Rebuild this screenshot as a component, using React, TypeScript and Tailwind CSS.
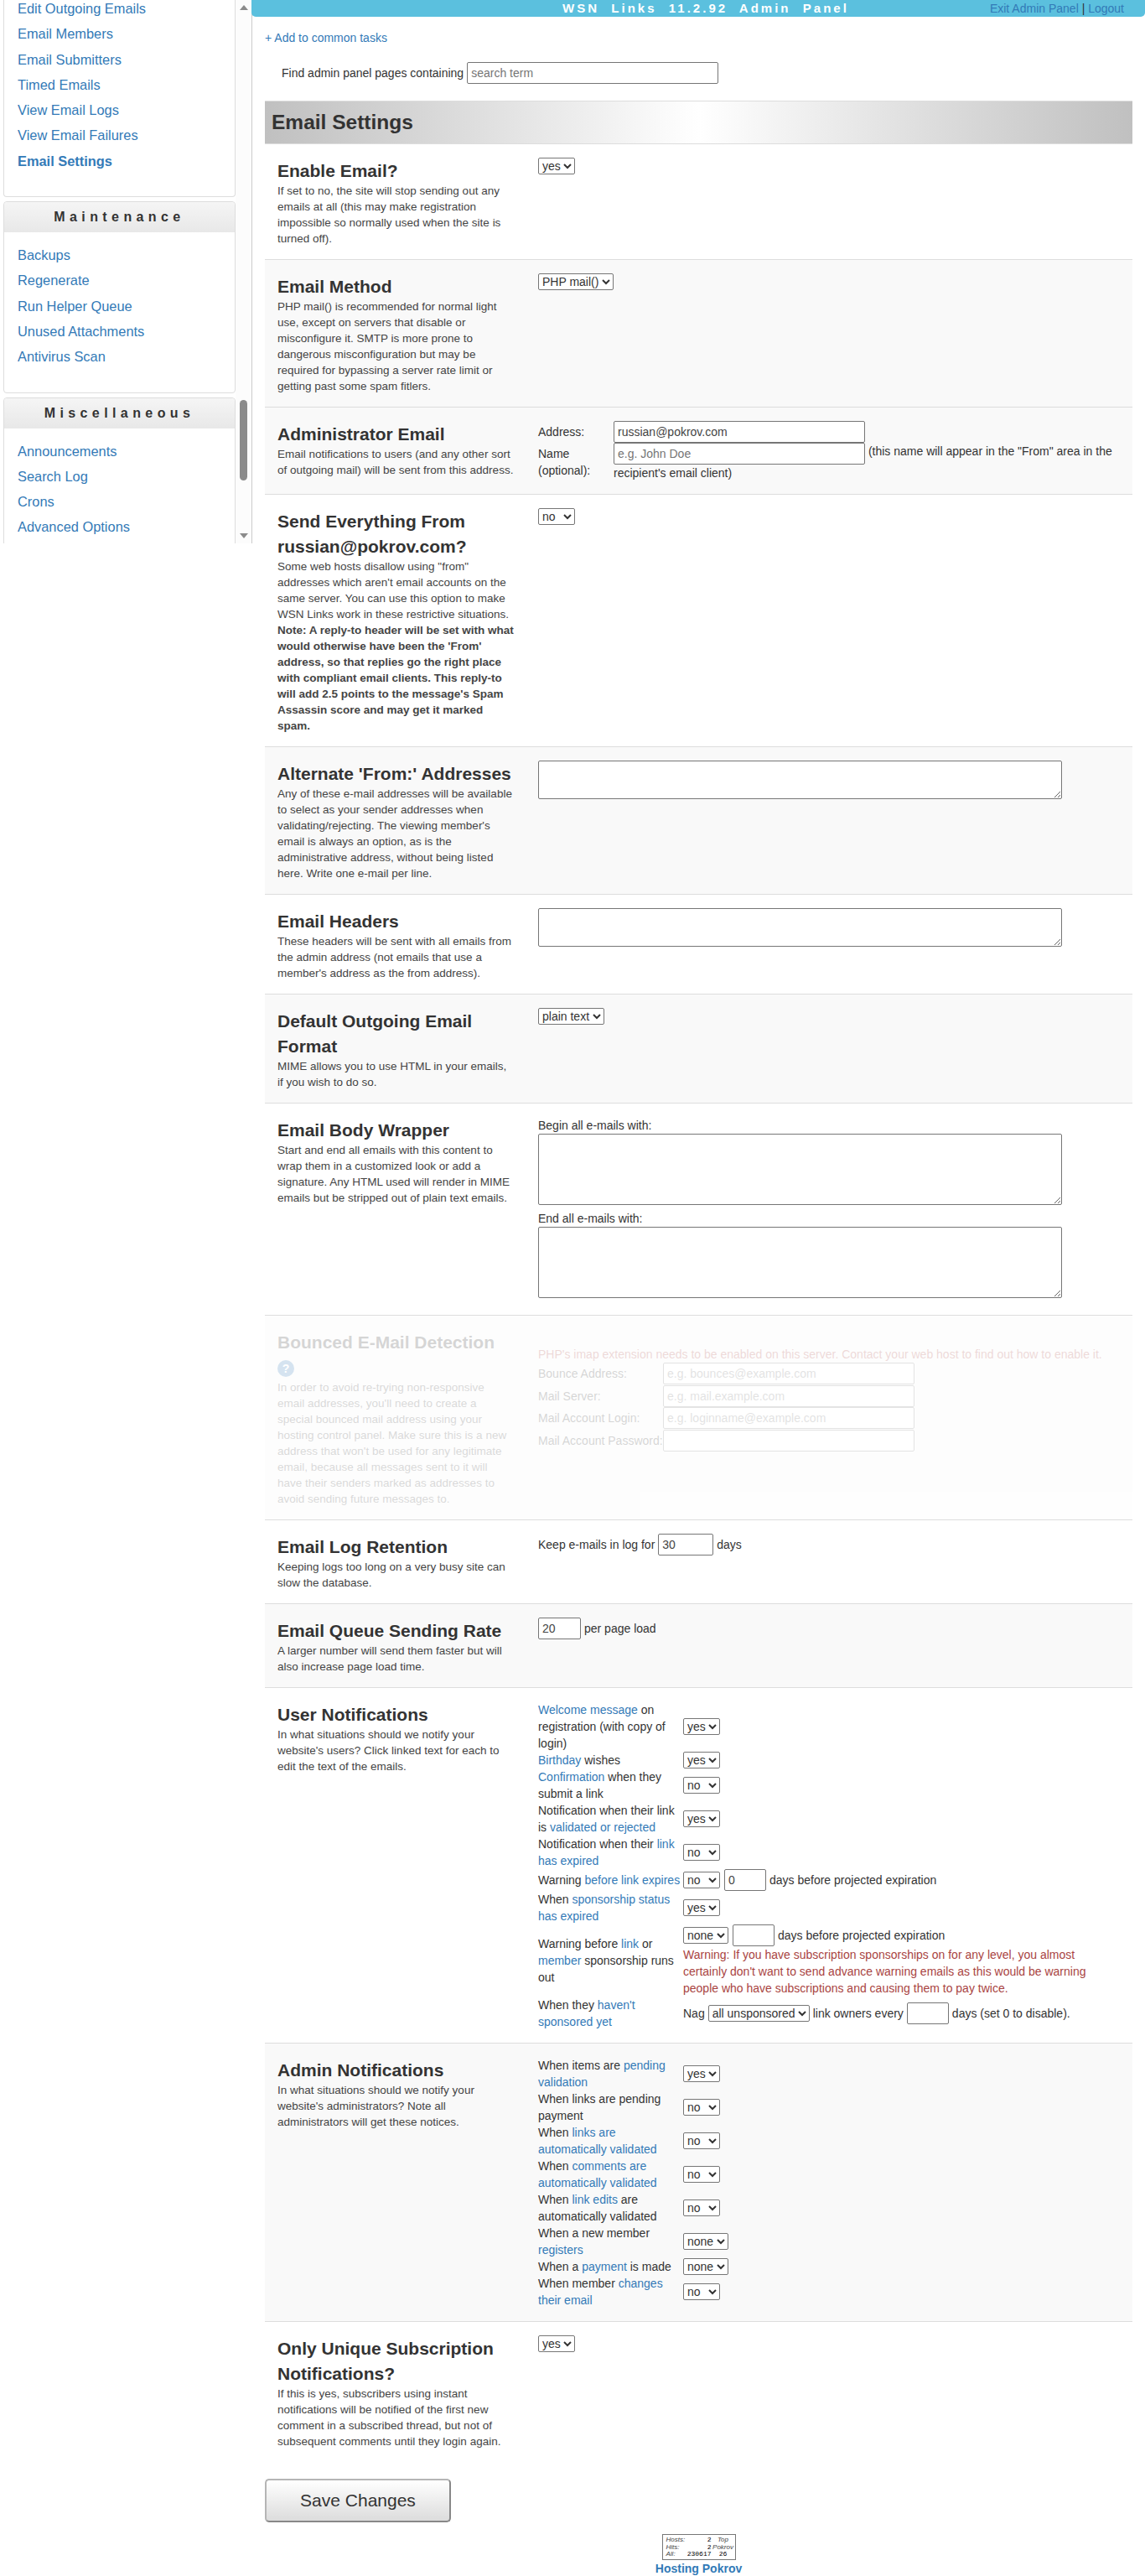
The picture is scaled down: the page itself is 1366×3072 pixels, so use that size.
import type { ReactNode } from "react";

const A = ({ children }: { children: ReactNode }) => (
  <a href="#" className="text-[#337ab7]">
    {children}
  </a>
);

const INPUT = "h-[26px] rounded-[2px] border border-[#767676] bg-white px-[4px] text-[#444] placeholder:text-[#757575]";
const TEXTAREA = "block w-[625px] resize rounded-[2px] border border-[#767676] bg-white";

function Select({ options, className = "" }: { options: string[]; className?: string }) {
  return (
    <select className={`h-[20px] rounded-[2px] border border-[#767676] bg-white text-[14px] text-[#333] ${className}`}>
      {options.map((o) => (
        <option key={o}>{o}</option>
      ))}
    </select>
  );
}

const yes = ["yes", "no"];
const no = ["no", "yes"];
const none = ["none", "no", "yes"];

function SideCard({ title, items, active }: { title?: string; items: string[]; active?: string }) {
  return (
    <div className={`mb-[5px] rounded-b-[4px] border border-[#ddd] pb-[27px] ${title ? "rounded-t-[4px]" : "border-t-0"}`}>
      {title ? (
        <div className="mb-[12px] h-[36px] rounded-t-[4px] bg-gradient-to-b from-[#f5f5f5] to-[#e8e8e8] text-center text-[16px] leading-[36px] font-bold tracking-[5.4px] text-[#333]">
          {title}
        </div>
      ) : (
        <div className="-mt-[5px]" />
      )}
      {items.map((item) => (
        <div key={item} className={`pl-[16px] text-[16.4px] leading-[30.3px] text-[#337ab7] ${item === active ? "font-bold" : ""}`}>
          {item}
        </div>
      ))}
    </div>
  );
}

function Sidebar() {
  return (
    <aside className="flex h-[648px] w-[301px] shrink-0 overflow-hidden">
      <div className="w-[281px] shrink-0 pl-[4px]">
        <SideCard
          items={["Edit Outgoing Emails", "Email Members", "Email Submitters", "Timed Emails", "View Email Logs", "View Email Failures", "Email Settings"]}
          active="Email Settings"
        />
        <SideCard title="Maintenance" items={["Backups", "Regenerate", "Run Helper Queue", "Unused Attachments", "Antivirus Scan"]} />
        <SideCard title="Miscellaneous" items={["Announcements", "Search Log", "Crons", "Advanced Options"]} />
      </div>
      {/* scrollbar */}
      <div className="flex w-[20px] flex-col items-center border-r border-[#ccc] bg-[#fcfcfc]">
        <svg width="10" height="6" viewBox="0 0 10 6" className="mt-[6px] fill-[#8b8b8b]">
          <path d="M5 0l5 6H0z" />
        </svg>
        <div className="mt-[465px] h-[96px] w-[9px] rounded-full bg-[#8b8b8b]" />
        <svg width="10" height="6" viewBox="0 0 10 6" className="mt-[63px] fill-[#8b8b8b]">
          <path d="M0 0h10L5 6z" />
        </svg>
      </div>
    </aside>
  );
}

function Section({
  title,
  desc,
  shaded,
  children,
  last,
}: {
  title: ReactNode;
  desc: ReactNode;
  shaded?: boolean;
  children: ReactNode;
  last?: boolean;
}) {
  return (
    <div className={`grid grid-cols-[326px_1fr] pt-[16px] pb-[15px] ${shaded ? "bg-[#f9f9f9]" : ""} ${last ? "" : "border-b border-[#ddd]"}`}>
      <div className="pr-[29px] pl-[15px]">
        <h3 className="mt-[1px] -mb-[1px] text-[21px] leading-[30px] font-bold text-[#333]">{title}</h3>
        <p className="text-[13.5px] leading-[19px] text-[#444]">{desc}</p>
      </div>
      <div className="pr-[15px]">{children}</div>
    </div>
  );
}

function NotifyTable({ rows }: { rows: [ReactNode, ReactNode][] }) {
  return (
    <div className="grid grid-cols-[173px_1fr] items-center">
      {rows.map(([label, control], i) => (
        <div key={i} className="contents">
          <div className="pr-[2px]">{label}</div>
          <div>{control}</div>
        </div>
      ))}
    </div>
  );
}

function Counter() {
  return (
    <div className="mx-auto grid h-[31px] w-[88px] grid-cols-[58px_1fr] border border-[#777] bg-white text-[8px] leading-[8.5px] text-[#444] italic">
      <div className="pt-[2px] pl-[4px]">
        <div className="flex justify-between">
          Hosts: <span className="font-['Liberation_Mono',monospace] text-black not-italic">2</span>
        </div>
        <div className="flex justify-between">
          Hits: <span className="font-['Liberation_Mono',monospace] text-black not-italic">2</span>
        </div>
        <div className="flex justify-between">
          All: <span className="font-['Liberation_Mono',monospace] text-black not-italic">230617</span>
        </div>
      </div>
      <div className="pt-[2px] text-center">
        <div>Top</div>
        <div>Pokrov</div>
        <div className="font-['Liberation_Mono',monospace] text-black not-italic">26</div>
      </div>
    </div>
  );
}

export default function App() {
  const inline = "flex items-center gap-[4px]";
  return (
    <div className="flex w-[1366px] items-start bg-white font-['Liberation_Sans',Arial,sans-serif] text-[14px] leading-[20px] text-[#333]">
      <Sidebar />
      <main className="min-w-0 flex-1">
        <header className="-ml-[1px] flex h-[20px] items-center rounded-b-[5px] bg-[#5bc0de]">
          <span className="ml-[371px] text-[15px] font-bold tracking-[3px] whitespace-pre text-white">WSN  Links  11.2.92  Admin  Panel</span>
          <span className="mr-[25px] ml-auto text-[#337ab7]">
            Exit Admin Panel <span className="text-[#333]">|</span> Logout
          </span>
        </header>

        <div className="px-[15px]">
          <div className="pt-[16px] text-[14px] leading-[19px] text-[#337ab7]">+ Add to common tasks</div>
          <div className="mt-[19px] flex items-center gap-[4px] pl-[20px]">
            Find admin panel pages containing
            <input className={`${INPUT} w-[300px]`} placeholder="search term" />
          </div>

          <h2 className="mt-[20px] h-[52px] border-y border-[#ddd] bg-gradient-to-r from-[#c0c0c0] via-[#ffffff] to-[#c0c0c0] pl-[8px] text-[24.5px] leading-[50px] font-bold text-[#333]">
            Email Settings
          </h2>

          <Section
            title="Enable Email?"
            desc="If set to no, the site will stop sending out any emails at all (this may make registration impossible so normally used when the site is turned off)."
          >
            <Select options={yes} />
          </Section>

          <Section
            shaded
            title="Email Method"
            desc="PHP mail() is recommended for normal light use, except on servers that disable or misconfigure it. SMTP is more prone to dangerous misconfiguration but may be required for bypassing a server rate limit or getting past some spam fitlers."
          >
            <Select options={["PHP mail()", "SMTP"]} />
          </Section>

          <Section
            shaded
            title="Administrator Email"
            desc="Email notifications to users (and any other sort of outgoing mail) will be sent from this address."
          >
            <div className="grid grid-cols-[90px_1fr] items-center">
              <div>Address:</div>
              <input className={`${INPUT} w-[300px]`} defaultValue="russian@pokrov.com" />
              <div className="pr-[20px]">Name (optional):</div>
              <div>
                <input className={`${INPUT} w-[300px] align-top`} placeholder="e.g. John Doe" /> (this name will appear in the "From" area in the recipient's email client)
              </div>
            </div>
          </Section>

          <Section
            title="Send Everything From russian@pokrov.com?"
            desc={
              <>
                Some web hosts disallow using "from" addresses which aren't email accounts on the same server. You can use this option to make WSN Links work in these restrictive situations.{" "}
                <b>
                  Note: A reply-to header will be set with what would otherwise have been the 'From' address, so that replies go the right place with compliant email clients. This reply-to will add 2.5 points to the message's Spam Assassin score and may get it marked spam.
                </b>
              </>
            }
          >
            <Select options={no} />
          </Section>

          <Section
            shaded
            title="Alternate 'From:' Addresses"
            desc="Any of these e-mail addresses will be available to select as your sender addresses when validating/rejecting. The viewing member's email is always an option, as is the administrative address, without being listed here. Write one e-mail per line."
          >
            <textarea className={`${TEXTAREA} h-[46px]`} />
          </Section>

          <Section title="Email Headers" desc="These headers will be sent with all emails from the admin address (not emails that use a member's address as the from address).">
            <textarea className={`${TEXTAREA} h-[46px]`} />
          </Section>

          <Section shaded title="Default Outgoing Email Format" desc="MIME allows you to use HTML in your emails, if you wish to do so.">
            <Select options={["plain text", "HTML"]} />
          </Section>

          <Section
            title="Email Body Wrapper"
            desc="Start and end all emails with this content to wrap them in a customized look or add a signature. Any HTML used will render in MIME emails but be stripped out of plain text emails."
          >
            <div className="pb-[5px]">
              Begin all e-mails with:
              <textarea className={`${TEXTAREA} mb-[6px] h-[85px]`} />
              End all e-mails with:
              <textarea className={`${TEXTAREA} h-[85px]`} />
            </div>
          </Section>

          <div className="border-b border-[#ddd]">
            <div className="opacity-20">
              <Section
                shaded
                last
                title={
                  <>
                    Bounced E-Mail Detection{" "}
                    <svg width="20" height="20" viewBox="0 0 20 20" className="inline-block align-middle">
                      <circle cx="10" cy="10" r="10" fill="#337ab7" />
                      <text x="10" y="15" textAnchor="middle" fontSize="14" fontWeight="bold" fill="#fff">
                        ?
                      </text>
                    </svg>
                  </>
                }
                desc="In order to avoid re-trying non-responsive email addresses, you'll need to create a special bounced mail address using your hosting control panel. Make sure this is a new address that won't be used for any legitimate email, because all messages sent to it will have their senders marked as addresses to avoid sending future messages to."
              >
                <div className="pt-[20px] text-[#a94442]">PHP's imap extension needs to be enabled on this server. Contact your web host to find out how to enable it.</div>
                <div className="grid grid-cols-[149px_1fr] items-center gap-y-[0.5px]">
                  <div>Bounce Address:</div>
                  <input className={`${INPUT} w-[300px]`} placeholder="e.g. bounces@example.com" />
                  <div>Mail Server:</div>
                  <input className={`${INPUT} w-[300px]`} placeholder="e.g. mail.example.com" />
                  <div>Mail Account Login:</div>
                  <input className={`${INPUT} w-[300px]`} placeholder="e.g. loginname@example.com" />
                  <div>Mail Account Password:</div>
                  <input className={`${INPUT} w-[300px]`} />
                </div>
              </Section>
            </div>
          </div>

          <Section title="Email Log Retention" desc="Keeping logs too long on a very busy site can slow the database.">
            <div className={inline}>
              Keep e-mails in log for
              <input className={`${INPUT} w-[66px]`} defaultValue="30" /> days
            </div>
          </Section>

          <Section shaded title="Email Queue Sending Rate" desc="A larger number will send them faster but will also increase page load time.">
            <div className={inline}>
              <input className={`${INPUT} w-[51px]`} defaultValue="20" /> per page load
            </div>
          </Section>

          <Section title="User Notifications" desc="In what situations should we notify your website's users? Click linked text for each to edit the text of the emails.">
            <NotifyTable
              rows={[
                [<><A>Welcome message</A> on registration (with copy of login)</>, <Select options={yes} />],
                [<><A>Birthday</A> wishes</>, <Select options={yes} />],
                [<><A>Confirmation</A> when they submit a link</>, <Select options={no} />],
                [<>Notification when their link is <A>validated or rejected</A></>, <Select options={yes} />],
                [<>Notification when their <A>link has expired</A></>, <Select options={no} />],
                [
                  <>Warning <A>before link expires</A></>,
                  <div className={inline}>
                    <Select options={no} className="mr-[1px]" />
                    <input className={`${INPUT} w-[50px]`} defaultValue="0" /> days before projected expiration
                  </div>,
                ],
                [<>When <A>sponsorship status has expired</A></>, <Select options={yes} />],
                [
                  <>Warning before <A>link</A> or <A>member</A> sponsorship runs out</>,
                  <>
                    <div className={inline}>
                      <Select options={none} className="mr-[1px]" />
                      <input className={`${INPUT} w-[50px]`} /> days before projected expiration
                    </div>
                    <div className="text-[#a94442]">
                      Warning: If you have subscription sponsorships on for any level, you almost certainly don't want to send advance warning emails as this would be warning people who have subscriptions and causing them to pay twice.
                    </div>
                  </>,
                ],
                [
                  <>When they <A>haven't sponsored yet</A></>,
                  <div className={inline}>
                    Nag
                    <Select options={["all unsponsored", "none"]} /> link owners every
                    <input className={`${INPUT} w-[50px]`} /> days (set 0 to disable).
                  </div>,
                ],
              ]}
            />
          </Section>

          <Section shaded title="Admin Notifications" desc="In what situations should we notify your website's administrators? Note all administrators will get these notices.">
            <NotifyTable
              rows={[
                [<>When items are <A>pending validation</A></>, <Select options={yes} />],
                [<>When links are pending payment</>, <Select options={no} />],
                [<>When <A>links are automatically validated</A></>, <Select options={no} />],
                [<>When <A>comments are automatically validated</A></>, <Select options={no} />],
                [<>When <A>link edits</A> are automatically validated</>, <Select options={no} />],
                [<>When a new member <A>registers</A></>, <Select options={none} />],
                [<>When a <A>payment</A> is made</>, <Select options={none} />],
                [<>When member <A>changes their email</A></>, <Select options={no} />],
              ]}
            />
          </Section>

          <Section
            last
            title="Only Unique Subscription Notifications?"
            desc="If this is yes, subscribers using instant notifications will be notified of the first new comment in a subscribed thread, but not of subsequent comments until they login again."
          >
            <Select options={yes} />
          </Section>

          <button className="mt-[20px] block h-[52px] w-[222px] rounded-[5px] border-2 border-[#b5b5b5] border-r-[#888] border-b-[#888] bg-gradient-to-b from-[#ffffff] to-[#dcdcdc] text-[21px] text-[#333]">
            Save Changes
          </button>

          <div className="mt-[14px] text-center">
            <Counter />
            <a href="#" className="block text-[14px] leading-[20px] font-bold text-[#337ab7]">
              Hosting Pokrov
            </a>
          </div>
        </div>
      </main>
    </div>
  );
}
